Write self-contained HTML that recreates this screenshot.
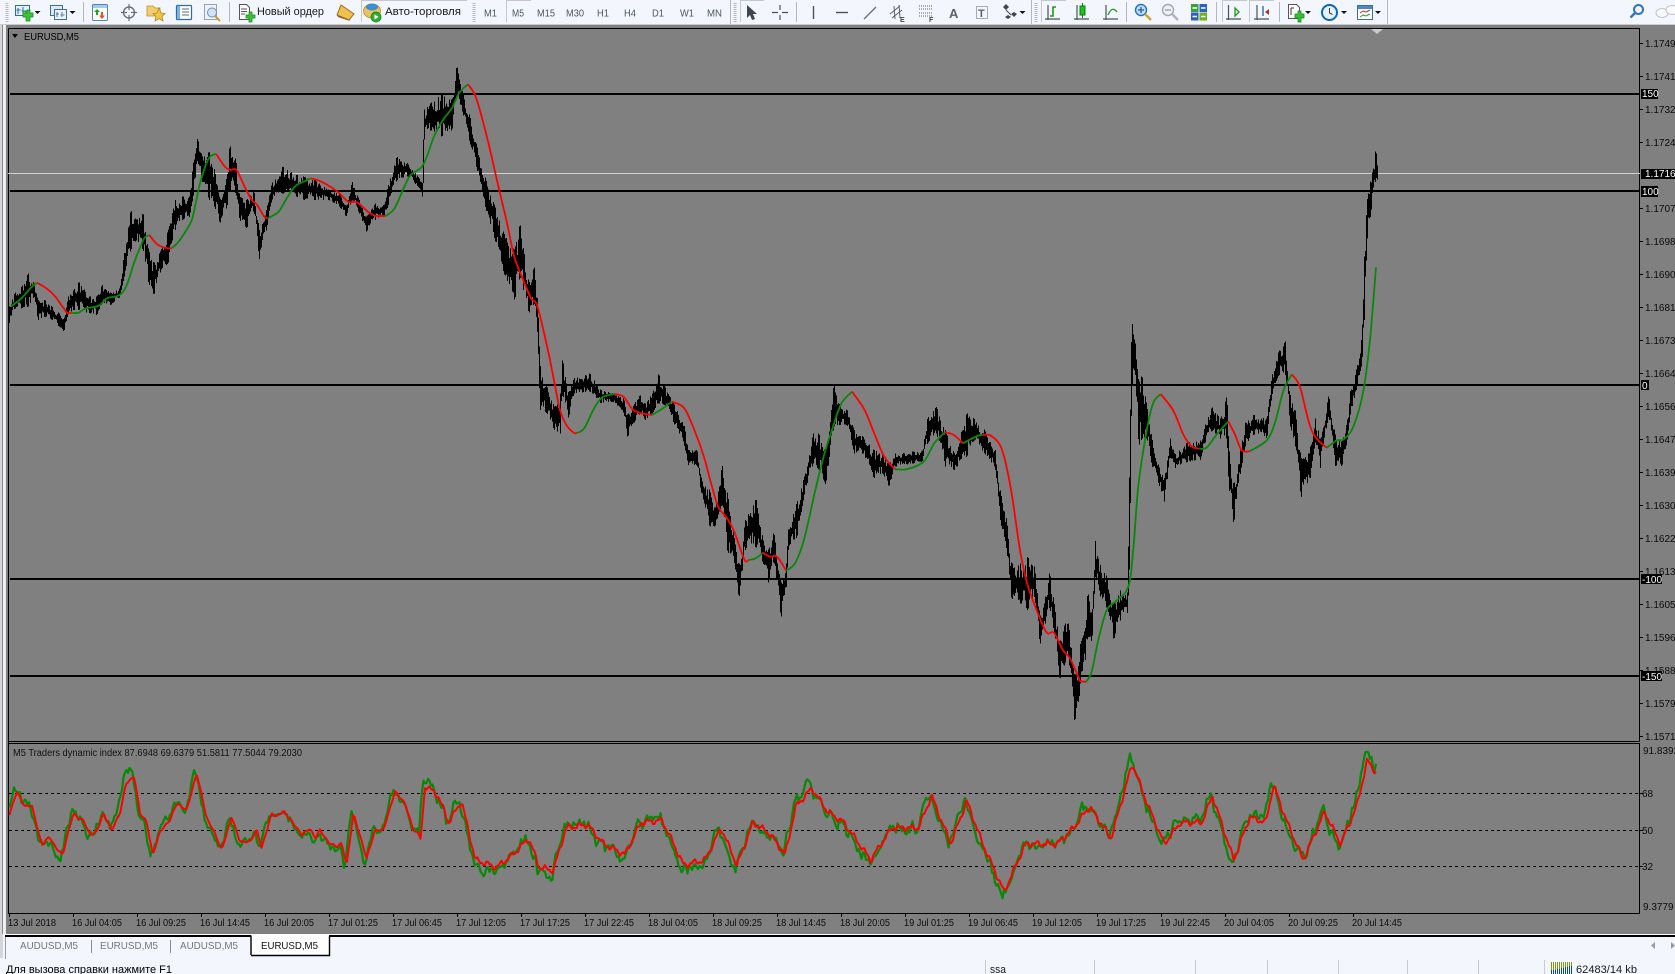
<!DOCTYPE html>
<html><head><meta charset="utf-8"><title>EURUSD,M5</title>
<style>
html,body{margin:0;padding:0;background:#f3f6fc;overflow:hidden}
svg{display:block}
text{font-family:"Liberation Sans","Noto Sans CJK SC",sans-serif;font-size:10px;fill:#000}
.tf{font-size:10px;fill:#4c5660}
.ax{font-size:10px;fill:#0c0c0c}
.wt{font-size:10px;fill:#fff}
.tab{font-size:10.5px;fill:#777}
.tb{font-size:11px;fill:#1a1a1a}
</style></head><body>
<svg id="s" xmlns="http://www.w3.org/2000/svg" width="1675" height="974" viewBox="0 0 1675 974">
<rect width="1675" height="974" fill="#f3f6fc"/>
<!-- toolbar bottom band -->
<rect x="0" y="24" width="1675" height="1" fill="#c8ccd2"/>
<rect x="4" y="25" width="1671" height="909" fill="#808080"/>
<rect x="0" y="25" width="3" height="933" fill="#d4d6da"/>
<rect x="2" y="25" width="1" height="933" fill="#8a8a8a"/>
<rect x="3" y="25" width="3" height="909" fill="#eceef2"/>
<!-- chart frames -->
<path d="M8.5 28.5H1639.5V741.5M8.5 28.5V913.5H1639.5V743.5H8.5M8.5 741.5H1639.5" fill="none" stroke="#000" stroke-width="1" shape-rendering="crispEdges"/>
<polygon points="1371,29 1383,29 1377,34" fill="#c8c8c8"/>
<!-- levels -->
<rect x="8" y="173" width="1632" height="1" fill="#d0d0d0"/>
<g fill="#000" shape-rendering="crispEdges">
<rect x="10" y="93" width="1630" height="2"/>
<rect x="10" y="190" width="1630" height="2"/>
<rect x="10" y="384" width="1630" height="2"/>
<rect x="10" y="578" width="1630" height="2"/>
<rect x="10" y="675" width="1630" height="2"/>
</g>
<g id="price"></g>
<g id="ma"></g>
<!-- indicator -->
<g stroke="#000" stroke-width="1" stroke-dasharray="3,3" shape-rendering="crispEdges">
<line x1="9" y1="793.5" x2="1639" y2="793.5"/>
<line x1="9" y1="830.5" x2="1639" y2="830.5"/>
<line x1="9" y1="866.5" x2="1639" y2="866.5"/>
</g>
<g id="osc"></g>
<text x="13" y="756" textLength="289" lengthAdjust="spacingAndGlyphs" style="fill:#111">M5 Traders dynamic index 87.6948 69.6379 51.5811 77.5044 79.2030</text>
<polygon points="12,34 18,34 15,38" fill="#000"/>
<text x="24" y="40" textLength="55" lengthAdjust="spacingAndGlyphs">EURUSD,M5</text>
<!-- price axis -->
<g stroke="#000" shape-rendering="crispEdges">
<path d="M1640 43.5h3M1640 76.5h3M1640 109.5h3M1640 142.5h3M1640 208.5h3M1640 241.5h3M1640 274.5h3M1640 307.5h3M1640 340.5h3M1640 373.5h3M1640 406.5h3M1640 439.5h3M1640 472.5h3M1640 505.5h3M1640 538.5h3M1640 571.5h3M1640 604.5h3M1640 637.5h3M1640 670.5h3M1640 703.5h3M1640 736.5h3M1640 793.5h3M1640 830.5h3M1640 866.5h3" fill="none"/>
</g>
<g class="axg">
<text class="ax" x="1645" y="47">1.17495</text>
<text class="ax" x="1645" y="80">1.17410</text>
<text class="ax" x="1645" y="113">1.17325</text>
<text class="ax" x="1645" y="146">1.17240</text>
<text class="ax" x="1645" y="212">1.17070</text>
<text class="ax" x="1645" y="245">1.16985</text>
<text class="ax" x="1645" y="278">1.16900</text>
<text class="ax" x="1645" y="311">1.16815</text>
<text class="ax" x="1645" y="344">1.16730</text>
<text class="ax" x="1645" y="377">1.16645</text>
<text class="ax" x="1645" y="410">1.16560</text>
<text class="ax" x="1645" y="443">1.16475</text>
<text class="ax" x="1645" y="476">1.16390</text>
<text class="ax" x="1645" y="509">1.16305</text>
<text class="ax" x="1645" y="542">1.16220</text>
<text class="ax" x="1645" y="575">1.16135</text>
<text class="ax" x="1645" y="608">1.16050</text>
<text class="ax" x="1645" y="641">1.15965</text>
<text class="ax" x="1645" y="674">1.15880</text>
<text class="ax" x="1645" y="707">1.15795</text>
<text class="ax" x="1645" y="740">1.15710</text>
<text class="ax" x="1643" y="754">91.8392</text>
<text class="ax" x="1642" y="797">68</text>
<text class="ax" x="1642" y="834">50</text>
<text class="ax" x="1642" y="870">32</text>
<text class="ax" x="1643" y="910">9.3779</text>
</g>
<!-- tags -->
<g fill="#000" shape-rendering="crispEdges">
<rect x="1641" y="169" width="34" height="10"/>
<rect x="1641" y="89" width="17" height="10"/>
<rect x="1641" y="186" width="17" height="11"/>
<rect x="1641" y="380" width="8" height="10"/>
<rect x="1641" y="574" width="21" height="10"/>
<rect x="1641" y="671" width="21" height="10"/>
</g>
<text class="wt" x="1645" y="177">1.17160</text>
<text class="wt" x="1642" y="97">150</text>
<text class="wt" x="1642" y="195">100</text>
<text class="wt" x="1642" y="389">0</text>
<text class="wt" x="1642" y="583">-100</text>
<text class="wt" x="1642" y="680">-150</text>
<!-- time axis -->
<path d="M9.5 914v3M73.5 914v3M137.5 914v3M201.5 914v3M265.5 914v3M329.5 914v3M393.5 914v3M457.5 914v3M521.5 914v3M585.5 914v3M649.5 914v3M713.5 914v3M777.5 914v3M841.5 914v3M905.5 914v3M969.5 914v3M1033.5 914v3M1097.5 914v3M1161.5 914v3M1225.5 914v3M1289.5 914v3M1353.5 914v3" stroke="#000" shape-rendering="crispEdges"/>
<g>
<text class="ax" x="8" y="926" textLength="48" lengthAdjust="spacingAndGlyphs">13 Jul 2018</text>
<text class="ax" x="72" y="926" textLength="50" lengthAdjust="spacingAndGlyphs">16 Jul 04:05</text>
<text class="ax" x="136" y="926" textLength="50" lengthAdjust="spacingAndGlyphs">16 Jul 09:25</text>
<text class="ax" x="200" y="926" textLength="50" lengthAdjust="spacingAndGlyphs">16 Jul 14:45</text>
<text class="ax" x="264" y="926" textLength="50" lengthAdjust="spacingAndGlyphs">16 Jul 20:05</text>
<text class="ax" x="328" y="926" textLength="50" lengthAdjust="spacingAndGlyphs">17 Jul 01:25</text>
<text class="ax" x="392" y="926" textLength="50" lengthAdjust="spacingAndGlyphs">17 Jul 06:45</text>
<text class="ax" x="456" y="926" textLength="50" lengthAdjust="spacingAndGlyphs">17 Jul 12:05</text>
<text class="ax" x="520" y="926" textLength="50" lengthAdjust="spacingAndGlyphs">17 Jul 17:25</text>
<text class="ax" x="584" y="926" textLength="50" lengthAdjust="spacingAndGlyphs">17 Jul 22:45</text>
<text class="ax" x="648" y="926" textLength="50" lengthAdjust="spacingAndGlyphs">18 Jul 04:05</text>
<text class="ax" x="712" y="926" textLength="50" lengthAdjust="spacingAndGlyphs">18 Jul 09:25</text>
<text class="ax" x="776" y="926" textLength="50" lengthAdjust="spacingAndGlyphs">18 Jul 14:45</text>
<text class="ax" x="840" y="926" textLength="50" lengthAdjust="spacingAndGlyphs">18 Jul 20:05</text>
<text class="ax" x="904" y="926" textLength="50" lengthAdjust="spacingAndGlyphs">19 Jul 01:25</text>
<text class="ax" x="968" y="926" textLength="50" lengthAdjust="spacingAndGlyphs">19 Jul 06:45</text>
<text class="ax" x="1032" y="926" textLength="50" lengthAdjust="spacingAndGlyphs">19 Jul 12:05</text>
<text class="ax" x="1096" y="926" textLength="50" lengthAdjust="spacingAndGlyphs">19 Jul 17:25</text>
<text class="ax" x="1160" y="926" textLength="50" lengthAdjust="spacingAndGlyphs">19 Jul 22:45</text>
<text class="ax" x="1224" y="926" textLength="50" lengthAdjust="spacingAndGlyphs">20 Jul 04:05</text>
<text class="ax" x="1288" y="926" textLength="50" lengthAdjust="spacingAndGlyphs">20 Jul 09:25</text>
<text class="ax" x="1352" y="926" textLength="50" lengthAdjust="spacingAndGlyphs">20 Jul 14:45</text>
</g>
<!-- tabs -->
<rect x="3" y="934" width="1672" height="40" fill="#f3f6fc"/>
<rect x="0" y="934" width="1675" height="1" fill="#fff"/>
<rect x="5" y="935" width="1670" height="2" fill="#000" shape-rendering="crispEdges"/>
<rect x="5" y="937" width="1" height="22" fill="#9a9a9a"/>
<rect x="0" y="934" width="3" height="24" fill="#d4d6da"/>
<rect x="91" y="940" width="1" height="13" fill="#8c8c8c"/>
<rect x="170" y="940" width="1" height="13" fill="#8c8c8c"/>
<text class="tab" x="20" y="949" textLength="58" lengthAdjust="spacingAndGlyphs">AUDUSD,M5</text>
<text class="tab" x="100" y="949" textLength="58" lengthAdjust="spacingAndGlyphs">EURUSD,M5</text>
<text class="tab" x="180" y="949" textLength="58" lengthAdjust="spacingAndGlyphs">AUDUSD,M5</text>
<rect x="251" y="935" width="78" height="20" fill="#fff"/>
<path d="M251 935.5V955M251 955.5H329.5V936" fill="none" stroke="#000" stroke-width="1.4"/>
<text class="tab" x="261" y="949" textLength="57" lengthAdjust="spacingAndGlyphs" style="fill:#111">EURUSD,M5</text>
<polygon points="1655,942 1655,949 1651,945.5" fill="#9a9a9a"/>
<polygon points="1671,942 1671,949 1675,945.5" fill="#9a9a9a"/>
<!-- status bar -->
<text class="tb" x="6" y="973" textLength="166" lengthAdjust="spacingAndGlyphs" style="fill:#000">Для вызова справки нажмите F1</text>
<g fill="#c8ccd2" shape-rendering="crispEdges">
<rect x="985" y="960" width="1" height="14"/><rect x="1094" y="960" width="1" height="14"/><rect x="1195" y="960" width="1" height="14"/><rect x="1267" y="960" width="1" height="14"/><rect x="1338" y="960" width="1" height="14"/><rect x="1407" y="960" width="1" height="14"/><rect x="1478" y="960" width="1" height="14"/><rect x="1544" y="960" width="1" height="14"/>
</g>
<text class="tb" x="990" y="973" textLength="16" lengthAdjust="spacingAndGlyphs">ssa</text>
<g shape-rendering="crispEdges">
<path d="M1551.5 962v12M1553.5 962v12M1555.5 962v12M1557.5 962v12M1559.5 962v12M1561.5 962v12M1563.5 962v12M1565.5 962v12M1567.5 962v12M1569.5 962v12M1571.5 962v12" stroke="#7f9a10" stroke-width="1"/>
<path d="M1551.5 970v4M1553.5 970v4M1555.5 970v4M1557.5 969v5M1559.5 969v5M1561.5 968v6M1563.5 968v6M1565.5 967v7M1567.5 967v7M1569.5 966v8M1571.5 966v8" stroke="#0e4a6e" stroke-width="1"/>
</g>
<text class="tb" x="1576" y="973" textLength="61" lengthAdjust="spacingAndGlyphs">62483/14 kb</text>

<!-- toolbar -->
<g stroke="#b4b8be" stroke-width="3" stroke-dasharray="1,1" fill="none" shape-rendering="crispEdges">
<line x1="7" y1="3" x2="7" y2="22"/><line x1="474" y1="3" x2="474" y2="22"/><line x1="735" y1="3" x2="735" y2="22"/><line x1="1036" y1="3" x2="1036" y2="22"/>
</g>
<g fill="#b4b8be" shape-rendering="crispEdges">
<rect x="83" y="2" width="1" height="20"/><rect x="229" y="2" width="1" height="20"/><rect x="730" y="0" width="1" height="24"/><rect x="796" y="2" width="1" height="20"/><rect x="1031" y="0" width="1" height="24"/><rect x="1126" y="2" width="1" height="20"/><rect x="1216" y="2" width="1" height="20"/><rect x="1279" y="2" width="1" height="20"/><rect x="1387" y="0" width="1" height="24"/>
</g>
<!-- pressed buttons -->
<g fill="#c4c9d0" shape-rendering="crispEdges">
<rect x="361" y="0" width="106" height="1"/><rect x="361" y="0" width="1" height="22"/>
<rect x="506" y="0" width="25" height="1"/><rect x="506" y="0" width="1" height="22"/>
<rect x="740" y="0" width="24" height="1"/><rect x="740" y="0" width="1" height="22"/>
<rect x="1041" y="0" width="25" height="1"/><rect x="1041" y="0" width="1" height="22"/>
<rect x="1222" y="0" width="25" height="1"/><rect x="1222" y="0" width="1" height="22"/>
<rect x="1249" y="0" width="25" height="1"/><rect x="1249" y="0" width="1" height="22"/>
</g>
<!-- dropdown arrows -->
<g fill="#111">
<polygon points="34.5,11 40.5,11 37.5,14"/><polygon points="69.5,11 75.5,11 72.5,14"/>
<polygon points="1019.5,11 1025.5,11 1022.5,14"/><polygon points="1305,11 1311,11 1308,14"/>
<polygon points="1341,11 1347,11 1344,14"/><polygon points="1375,11 1381,11 1378,14"/>
</g>
<!-- new chart -->
<rect x="15.5" y="5.5" width="14" height="10" fill="#e6f0fb" stroke="#2a6cb0"/>
<path d="M18 8v6M16.5 10h4M23 7v6M21.500 11h4" stroke="#2a6cb0" fill="none"/>
<path d="M24 11h3v-1h3v3h3v4h-3v4h-4v-4h-3v-4h4z" fill="#3cc23c" stroke="#0e8a10" stroke-width=".7"/>
<!-- profiles -->
<rect x="50.5" y="5.5" width="12" height="10" fill="#dfe8f5" stroke="#3c6ea5"/>
<rect x="54.5" y="9.5" width="12" height="10" fill="#eef3fb" stroke="#3c6ea5"/>
<path d="M57 12v5M56 14h3M62 12v5M60.5 15h4" stroke="#5a7a9c" fill="none"/>
<!-- market watch -->
<rect x="92.5" y="4.5" width="15" height="16" rx="1" fill="#fff" stroke="#4c86c6"/>
<rect x="93" y="5" width="14" height="3" fill="#a9c9ea"/>
<polygon points="97,9 100,12 98,12 98,15 96,15 96,12 94,12" fill="#19a619"/>
<polygon points="102,19 105,15.5 103,15.5 103,12 101,12 101,15.5 99,15.5" fill="#e05030"/>
<!-- crosshair -->
<circle cx="129" cy="12.5" r="5.5" fill="none" stroke="#6a6f76" stroke-width="1.4"/>
<path d="M129 4v6M129 15v6M121 12.5h6M131 12.5h6" stroke="#6a6f76" stroke-width="1.2" fill="none"/>
<!-- folder star -->
<path d="M147 6h6l2 2h5v8h-13z" fill="#f1cf70" stroke="#b89030" stroke-width=".8"/>
<polygon points="159,8 161,13 165,13.5 162,16.5 163,21 159,18.7 155,21 156,16.5 153,13.5 157,13" fill="#f0c840" stroke="#b08820" stroke-width=".8"/>
<!-- terminal -->
<rect x="176.5" y="5.5" width="15" height="14" rx="1" fill="#fff" stroke="#2b6db0" stroke-width="1.2"/>
<rect x="177" y="6" width="3" height="13" fill="#7fb0e2"/>
<path d="M182 9h7M182 12h7M182 15h7" stroke="#5a6a7a"/>
<!-- tester -->
<rect x="204.5" y="4.5" width="12" height="15" fill="#eef2f8" stroke="#9aa4b0"/>
<circle cx="212" cy="12.5" r="4.5" fill="#cfe3f8" stroke="#7090b0"/>
<path d="M215 16l5 5" stroke="#c6a030" stroke-width="2"/>
<!-- new order -->
<path d="M239.5 4.5h7l3 3v12h-10z" fill="#fff" stroke="#555"/>
<path d="M241 9h6M241 11.5h6M241 14h4" stroke="#555"/>
<path d="M246 15h3v-3h3v3h3v3h-3v4h-3v-4h-3z" fill="#3cc23c" stroke="#0e8a10" stroke-width=".7"/>
<text class="tb" x="257" y="15" textLength="67" lengthAdjust="spacingAndGlyphs">Новый ордер</text>
<!-- metaeditor -->
<path d="M341 5l13 9-5 6-12-5z" fill="#efc050" stroke="#9c6c20"/>
<path d="M337 15l12 5 1 1-12-4z" fill="#8a5a20"/>
<!-- auto trading -->
<ellipse cx="372" cy="11" rx="8.5" ry="7" fill="#eac35a" stroke="#a58030" stroke-width=".7"/>
<ellipse cx="372" cy="7" rx="6" ry="3.5" fill="#3b8fd0"/>
<circle cx="376" cy="17" r="5" fill="#30ae30" stroke="#0c7c10" stroke-width=".7"/>
<polygon points="374.5,14.5 378.5,17 374.5,19.5" fill="#fff"/>
<text class="tb" x="385" y="15" textLength="76" lengthAdjust="spacingAndGlyphs">Авто-торговля</text>
<!-- timeframes -->
<text class="tf" x="484" y="16.5" textLength="13" lengthAdjust="spacingAndGlyphs">M1</text>
<text class="tf" x="512" y="16.5" textLength="12" lengthAdjust="spacingAndGlyphs">M5</text>
<text class="tf" x="537" y="16.5" textLength="18" lengthAdjust="spacingAndGlyphs">M15</text>
<text class="tf" x="566" y="16.5" textLength="18" lengthAdjust="spacingAndGlyphs">M30</text>
<text class="tf" x="597" y="16.5" textLength="12" lengthAdjust="spacingAndGlyphs">H1</text>
<text class="tf" x="624" y="16.5" textLength="12" lengthAdjust="spacingAndGlyphs">H4</text>
<text class="tf" x="652" y="16.5" textLength="12" lengthAdjust="spacingAndGlyphs">D1</text>
<text class="tf" x="680" y="16.5" textLength="14" lengthAdjust="spacingAndGlyphs">W1</text>
<text class="tf" x="707" y="16.5" textLength="15" lengthAdjust="spacingAndGlyphs">MN</text>
<!-- drawing tools -->
<polygon points="747,5 747,18 750,15 752,20 755,19 753,14 757,14" fill="#3e4650"/>
<path d="M772 12.5h6M782 12.5h6M780 5v5M780 15v5" stroke="#4a525c" stroke-width="1.2" fill="none"/>
<path d="M813.5 6v13" stroke="#4a525c" stroke-width="1.4"/>
<path d="M836 12.5h12" stroke="#4a525c" stroke-width="1.4"/>
<path d="M864 19l12-12" stroke="#6a727c" stroke-width="1.3"/>
<path d="M890 14l10-8M892 18l10-8M894 6l1 13M899 5l1 13" stroke="#5a626c" fill="none"/>
<text x="900" y="22" style="font-size:7px;font-weight:bold;fill:#444">E</text>
<path d="M919 6h13M919 9h13M919 13h13M919 16h13" stroke="#5a626c" stroke-dasharray="1,1"/>
<text x="929" y="22" style="font-size:7px;font-weight:bold;fill:#444">F</text>
<text x="949" y="18" style="font-size:13px;font-weight:bold;fill:#5a626c">A</text>
<rect x="976.5" y="6.5" width="11" height="12" fill="none" stroke="#5a626c" stroke-dasharray="1,1"/>
<text x="978" y="17" style="font-size:11px;font-weight:bold;fill:#5a626c">T</text>
<path d="M1006 10l-3-3 3-3 3 3zM1011 14l3-2 3 2-3 3zM1008 19l-3-2 3-2 3 2z" fill="#3e4650"/>
<path d="M1006 10l5 5" stroke="#3e4650"/>
<!-- chart types -->
<g fill="none" stroke="#4a525c" stroke-width="1.2">
<path d="M1048 5v15M1045 19h15M1077 5v15M1074 19h15M1106 5v15M1103 19h15M1228.5 5v15M1226 19h15M1257 5v15M1254 19h15"/>
</g>
<path d="M1050 16h3v-9h3" fill="none" stroke="#1a9a1a" stroke-width="1.6"/>
<rect x="1080" y="6" width="5" height="9" fill="#22c022" stroke="#0a7a0a"/>
<path d="M1082.5 3v3M1082.5 15v3" stroke="#0a7a0a"/>
<path d="M1108 15c3-7 6-7 9-3" fill="none" stroke="#2aa02a" stroke-width="1.4"/>
<!-- zoom -->
<circle cx="1141" cy="10" r="5.5" fill="#bfe0fa" stroke="#2a6fb8" stroke-width="1.4"/>
<path d="M1138 10h6M1141 7v6" stroke="#2a6fb8" stroke-width="1.5"/>
<path d="M1145 14l6 6" stroke="#d0a030" stroke-width="2.4"/>
<circle cx="1168" cy="10" r="5.5" fill="#eef0f4" stroke="#a4a8ae" stroke-width="1.4"/>
<path d="M1165 10h6" stroke="#a4a8ae" stroke-width="1.5"/>
<path d="M1172 14l6 6" stroke="#b0b4ba" stroke-width="2.4"/>
<!-- tile -->
<rect x="1191" y="4" width="7.5" height="8" fill="#3aa03a"/><rect x="1199.5" y="4" width="7.5" height="8" fill="#2a60c8"/><rect x="1191" y="12.5" width="7.5" height="8" fill="#2a60c8"/><rect x="1199.5" y="12.5" width="7.5" height="8" fill="#6ab020"/>
<path d="M1192.5 8h4.5M1201 8h4.5M1192.5 16.5h4.5M1201 16.5h4.5" stroke="#fff" stroke-width="1.6"/>
<!-- shift autoscroll -->
<polygon points="1235,8 1239,12 1235,16" fill="none" stroke="#1a9a1a" stroke-width="1.3"/>
<path d="M1263 6v10" stroke="#2a6ab0" stroke-width="1.4"/>
<polygon points="1269,9 1265,12 1269,15" fill="#b03020"/>
<!-- template -->
<path d="M1288.5 4.5h8l3 3v11h-11z" fill="#fff" stroke="#555"/>
<path d="M1291 8h3M1291 8v7" stroke="#333"/>
<path d="M1295 14h3v-3h3v3h3v4h-3v4h-3v-4h-3z" fill="#33c033" stroke="#0e8a10" stroke-width=".7"/>
<!-- clock -->
<circle cx="1329.5" cy="12.5" r="7.5" fill="#e8f2fc" stroke="#0f66b8" stroke-width="2"/>
<path d="M1329.5 8v5l3 1.5" stroke="#333" fill="none"/>
<!-- indicators -->
<rect x="1357.5" y="5.5" width="15" height="14" fill="#fff" stroke="#3a6ea8"/>
<rect x="1358" y="6" width="14" height="3" fill="#4b8ac6"/>
<path d="M1360 13l3-2 3 1 4-2" stroke="#c03020" fill="none"/>
<path d="M1360 17l3-2 3 1 4-2" stroke="#2a9a2a" fill="none"/>
<!-- search, chat -->
<circle cx="1638.5" cy="9.5" r="4.5" fill="none" stroke="#2e74c0" stroke-width="2"/>
<path d="M1635 13l-4.500 4.500" stroke="#2e74c0" stroke-width="2.400"/>
<ellipse cx="1662" cy="13" rx="6" ry="4.500" fill="#fafafa" stroke="#c0c4ca"/>
<ellipse cx="1672" cy="10" rx="6" ry="4.500" fill="#fafafa" stroke="#c0c4ca"/>
</svg>
<script>
(function(){
var NS="http://www.w3.org/2000/svg";
function mk(parent,tag,a){var e=document.createElementNS(NS,tag);for(var k in a)e.setAttribute(k,a[k]);document.getElementById(parent).appendChild(e);return e;}
function rng(s){return function(){s|=0;s=s+0x6D2B79F5|0;var t=Math.imul(s^s>>>15,1|s);t=t+Math.imul(t^t>>>7,61|t)^t;return((t^t>>>14)>>>0)/4294967296;};}
var R=rng(12345);
function A(m){return function(a){return a.map(function(p){return p.length==3?[m[0]+p[0]/m[1],m[2]+p[1]/m[3],m[2]+p[2]/m[3]]:[m[0]+p[0]/m[1],m[2]+p[1]/m[3]];});};}
var Z10=A([0,2.8,50,3]),Z11=A([520,2.8,350,3]),Z12=A([1000,3,130,2.529]);
var price=[].concat(Z10([[25,770,820],[40,730,775],[60,710,775],[78,670,770],[95,700,740],[105,750,810],[125,750,800],[145,770,810],[165,790,830],[178,810,845],[190,740,790],[205,720,780],[220,695,780],[250,740,790],[270,740,795],[285,705,760],[310,730,765],[335,715,740],[345,625,690],[365,480,600],[380,510,570],[400,490,600],[415,600,700],[430,640,735],[450,600,660],[470,540,640],[490,450,540],[510,440,510],[530,440,500],[540,340,440],[552,265,330],[565,320,395],[585,305,450],[600,360,470],[615,450,520],[635,380,470],[642,285,420],[660,330,430],[670,440,510],[690,450,535],[710,420,480],[725,540,628],[745,480,540],[760,400,450],[790,350,430],[830,375,440],[850,380,450],[880,390,450],[920,420,450],[950,430,470],[968,470,500],[985,395,450],[1005,450,490],[1025,500,545],[1050,460,510],[1075,465,500],[1085,410,470],[1110,320,390],[1140,340,380],[1170,380,410],[1182,400,440],[1186,180,260],[1205,160,240],[1235,130,260],[1265,150,240],[1278,45,130],[1295,130,190],[1315,200,280],[1335,290,360],[1360,390,480],[1385,470,570],[1410,550,670],[1440,600,750],[1455,520,680],[1480,700,790],[1495,650,760],[1505,760,860]]),
Z11([[55,45,180],[75,110,190],[95,170,240],[112,130,250],[118,25,130],[135,130,205],[150,85,130],[195,70,125],[225,120,160],[260,130,155],[290,145,190],[300,195,262],[320,160,215],[335,135,190],[350,160,210],[370,130,190],[387,72,160],[405,110,165],[430,160,220],[460,230,290],[470,300,345],[495,300,345],[505,380,420],[530,420,530],[545,480,530],[565,345,460],[580,430,605],[600,570,640],[612,650,748],[630,510,600],[660,445,590],[680,570,640],[695,600,700],[710,545,630],[730,700,805],[745,640,710],[750,540,600],[775,455,560],[795,380,435],[820,250,340],[835,250,360],[855,300,405],[878,100,230],[895,170,225],[915,180,225],[935,240,310],[960,260,310],[990,300,385],[1015,310,370],[1032,340,410],[1050,310,350],[1100,305,340],[1125,305,335],[1140,205,280],[1165,170,250],[1190,240,350],[1215,310,360],[1250,190,320],[1270,205,270],[1300,240,310],[1330,300,360],[1345,430,520],[1362,510,600],[1375,640,745],[1400,640,760],[1420,620,780],[1440,650,740],[1455,800,885],[1470,740,820],[1482,665,770],[1495,760,850],[1510,880,990],[1525,820,940],[1535,820,920],[1552,980,1120],[1565,940,1040]]),
Z12([[240,1300,1400],[255,1260,1340],[262,1165,1280],[275,1230,1295],[285,1040,1130],[300,1100,1180],[320,1130,1210],[340,1200,1290],[360,1165,1240],[382,1170,1220],[388,820,1090],[394,480,650],[405,540,620],[415,640,800],[425,620,780],[440,700,780],[455,780,850],[475,850,895],[492,880,940],[510,780,830],[525,820,855],[560,790,840],[600,785,835],[615,745,790],[635,700,760],[660,730,780],[680,670,780],[685,800,900],[700,900,998],[720,810,870],[735,740,800],[760,720,770],[800,730,780],[815,620,670],[835,560,620],[855,535,620],[870,670,750],[885,710,800],[902,830,930],[930,800,880],[945,730,790],[960,780,855],[985,670,720],[1005,770,850],[1025,790,850],[1040,740,790],[1050,660,720],[1070,600,650],[1085,520,590],[1092,320,480],[1100,180,280],[1110,130,220],[1127,45,120],[1130,90,125]]));
var d="",i=0,py1=null,py2=null;
for(var x=9;x<=1377;x++){
 while(i<price.length-2&&price[i+1][0]<x)i++;
 var a=price[i],b=price[i+1],t=Math.min(1,Math.max(0,(x-a[0])/(b[0]-a[0])));
 var lo=a[1]+(b[1]-a[1])*t,hi=a[2]+(b[2]-a[2])*t,h=hi-lo;
 var near=Math.min(Math.abs(x-a[0]),Math.abs(x-b[0]));
 var k=near<1?0:0.38;
 var y1=lo+h*R()*k,y2=hi-h*R()*k;
 if(py1!==null){ if(y1>py2)y1=py2; if(y2<py1)y2=py1; }
 py1=y1;py2=y2;
 d+="M"+(x+.5)+" "+y1.toFixed(1)+"V"+y2.toFixed(1);
}
mk("price","path",{d:d,stroke:"#000","stroke-width":"1",fill:"none","shape-rendering":"crispEdges"});

function smooth(p){var s="M"+p[0][0].toFixed(1)+" "+p[0][1].toFixed(1);for(var i=0;i<p.length-1;i++){var a=p[i-1]||p[i],b=p[i],c=p[i+1],e=p[i+2]||c;s+="C"+(b[0]+(c[0]-a[0])/6).toFixed(1)+" "+(b[1]+(c[1]-a[1])/6).toFixed(1)+" "+(c[0]-(e[0]-b[0])/6).toFixed(1)+" "+(c[1]-(e[1]-b[1])/6).toFixed(1)+" "+c[0].toFixed(1)+" "+c[1].toFixed(1);}return s;}
var G="#088808",Rd="#ff0000";
var segs=[
[G,Z10([[30,770],[60,745],[85,715],[103,698]])],
[Rd,Z10([[103,698],[130,715],[155,740],[175,770],[188,788],[200,789]])],
[G,Z10([[200,789],[220,788],[240,775],[275,768],[300,745],[335,735],[355,705],[375,640],[395,585],[405,563],[418,555]])],
[Rd,Z10([[418,555],[440,583],[465,594],[480,595]])],
[G,Z10([[480,595],[500,575],[535,515],[548,460],[560,400],[578,340],[590,318],[605,312]])],
[Rd,Z10([[605,312],[630,350],[645,360],[662,360],[685,410],[705,450],[720,465],[740,500],[750,505]])],
[G,Z10([[750,505],[780,485],[800,450],[825,410],[850,395],[870,385]])],
[Rd,Z10([[870,385],[900,395],[945,425],[975,455],[1000,457],[1030,485],[1050,497],[1080,498]])],
[G,Z10([[1080,498],[1105,475],[1130,415],[1150,375],[1180,352],[1195,320],[1215,260],[1240,210],[1265,175],[1285,130],[1310,103]])],
[Rd,Z10([[1310,103],[1330,135],[1350,205],[1370,290],[1385,360],[1400,430],[1420,520],[1440,620],[1465,690],[1487,745],[1505,770]]).concat(Z11([[78,0],[95,90],[112,180],[130,225],[150,248],[160,249]]))],
[G,Z11([[160,249],[180,235],[205,180],[230,142],[265,132]])],
[Rd,Z11([[265,132],[290,140],[315,178],[340,190],[370,195]])],
[G,Z11([[370,195],[400,175],[425,155]])],
[Rd,Z11([[425,155],[460,175],[490,245],[515,320],[535,400],[555,470],[580,505],[600,545],[628,628],[640,630]])],
[G,Z11([[640,630],[660,625],[680,608]])],
[Rd,Z11([[680,608],[700,620],[720,620],[745,662]])],
[G,Z11([[745,662],[770,640],[795,570],[825,430],[850,320],[875,235],[900,160],[930,125]])],
[Rd,Z11([[930,125],[965,180],[990,245],[1020,320],[1050,358]])],
[G,Z11([[1050,358],[1085,357],[1130,335],[1160,280],[1190,247]])],
[Rd,Z11([[1190,247],[1215,255],[1240,280]])],
[G,Z11([[1240,280],[1280,258],[1295,255]])],
[Rd,Z11([[1295,255],[1320,258],[1350,300],[1375,420],[1400,600],[1420,700],[1450,790],[1475,848],[1495,848],[1520,900],[1540,925],[1565,985]]).concat(Z12([[240,1393],[258,1396]]))],
[G,Z12([[258,1396],[275,1370],[295,1290],[320,1215],[350,1190],[385,1155],[400,1060],[415,900],[440,760],[460,690],[482,668]])],
[Rd,Z12([[482,668],[520,710],[550,770],[575,800],[598,806]])],
[G,Z12([[598,806],[620,803],[650,770],[685,737]])],
[Rd,Z12([[685,737],[705,770],[725,810],[750,812]])],
[G,Z12([[750,812],[800,785],[825,740],[850,660],[875,618]])],
[Rd,Z12([[875,618],[900,650],[935,760],[980,804]])],
[G,Z12([[980,804],[1010,785],[1030,783],[1060,750],[1090,660],[1110,530],[1128,347]])]
];
segs.forEach(function(s){mk("ma","path",{d:smooth(s[1]),stroke:s[0],"stroke-width":"1.8",fill:"none"});});

// oscillator
var z7=[[28,240],[50,170],[75,215],[95,210],[110,270],[125,330],[148,305],[165,335],[188,360],[205,290],[220,235],[235,250],[250,255],[270,300],[290,290],[310,235],[335,285],[360,235],[378,145],[403,125],[420,235],[440,260],[458,360],[480,290],[510,255],[530,205],[560,225],[590,115],[605,180],[620,250],[640,285],[665,345],[695,245],[720,320],[750,320],[770,285],[785,340],[815,235],[830,245],[850,228],[880,265],[905,300],[930,280],[945,310],[960,285],[985,322],[1010,335],[1025,325],[1040,390],[1060,235],[1100,370],[1125,285],[1150,285],[1185,170],[1215,205],[1240,285],[1260,300]].map(function(p){return[p[0]/3,735+p[1]/3];});
var dsp=[[393,795],[398,735],[410,745],[420,770],[432,750],[445,805],[465,812],[480,800],[495,785],[505,812],[518,815],[530,775],[550,772],[565,790],[585,800],[600,770],[620,768],[640,810],[660,805],[675,775],[690,810],[705,770],[720,780],[735,800],[745,755],[760,738],[775,760],[790,770],[815,805],[835,775],[860,775],[872,745],[890,790],[905,750],[920,790],[940,835],[960,790],[975,790],[990,790],[1005,775],[1020,755],[1040,785],[1060,715],[1075,755],[1090,790],[1105,770],[1125,770],[1135,745],[1155,805],[1170,765],[1185,770],[1192,735],[1205,770],[1220,805],[1240,760],[1255,790],[1270,755],[1280,712],[1288,723]].map(function(p){return[p[0]*1.0682,p[1]*1.0682];});
var os=z7.concat(dsp);
function ry(x){var i=0;while(i<os.length-2&&os[i+1][0]<x)i++;var a=os[i],b=os[i+1],t=Math.max(0,Math.min(1,(x-a[0])/(b[0]-a[0])));return a[1]+(b[1]-a[1])*t;}
var gp=[],rp=[],n=0;
for(var x=9.5;x<=1376;x+=1.5){
 n=n*0.62+(R()-.5)*9;
 var wig=x>420?2.2*Math.sin(x*.55)+1.4*Math.sin(x*1.3):0.8*Math.sin(x*.9);
 var gy=ry(x+2)+wig; gy=gy+(gy-830)*0.1+n;
 gp.push(x.toFixed(1)+","+Math.max(752,gy).toFixed(1));
 rp.push(x.toFixed(1)+","+(ry(x)+wig).toFixed(1));
}
mk("osc","polyline",{points:gp.join(" "),stroke:"#088808","stroke-width":"2.2",fill:"none","stroke-linejoin":"round"});
mk("osc","polyline",{points:rp.join(" "),stroke:"#ff0000","stroke-width":"2",fill:"none","stroke-linejoin":"round"});
})();
</script>
</body></html>
